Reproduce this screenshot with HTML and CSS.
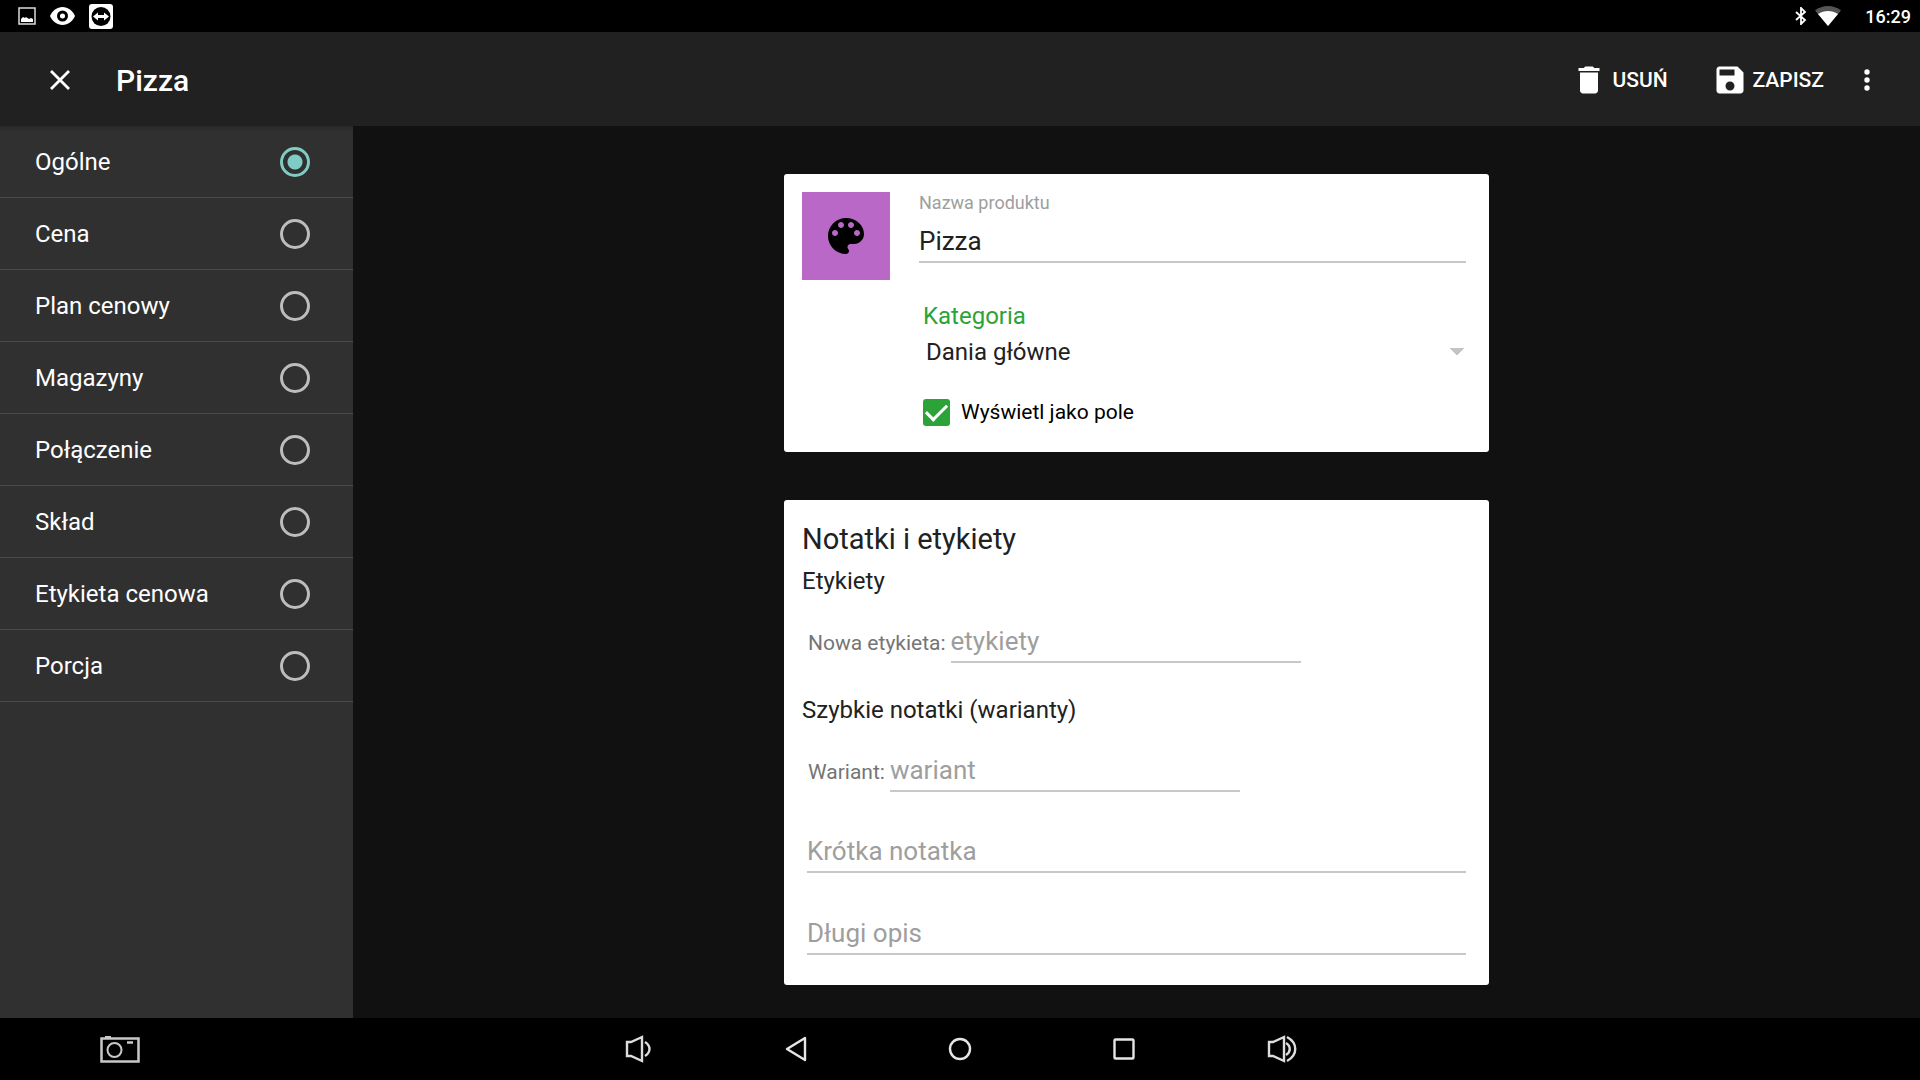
FILE: index.html
```html
<!DOCTYPE html>
<html lang="pl">
<head>
    <meta charset="UTF-8">
    <meta name="viewport" content="width=device-width, initial-scale=1.0">
    <title>Pizza</title>
    <link rel="stylesheet" href="styles.css">
</head>
<body>
    <div class="status-bar">
        <div class="status-icons">
            <svg width="18" height="18" viewBox="0 0 18 18">
                <rect x="1" y="1" width="16" height="16" fill="none" stroke="#ddd" stroke-width="1.5"/>
                <path d="M3 15v-3l2-2 2 1 1-1 3 2 2-1 2 1v3z" fill="#fff"/>
            </svg>
            <svg width="25" height="18" viewBox="0 0 25 18">
                <path d="M12.500 0C7 0 2.500 3.500 0 9c2.500 5.500 7 9 12.500 9S22.500 14.500 25 9C22.500 3.500 18 0 12.500 0z" fill="#fff"/>
                <circle cx="12.500" cy="9" r="4" fill="#fff" stroke="#000" stroke-width="3"/>
                <circle cx="12.500" cy="9" r="2" fill="#fff"/>
            </svg>
            <svg width="24" height="25" viewBox="0 0 24 25">
                <rect width="24" height="25" rx="3" fill="#fff"/>
                <circle cx="12" cy="12.500" r="9.500" fill="#000"/>
                <path d="M4 12.500l5-4v2.500h6V8.500l5 4-5 4V14H9v2.500z" fill="#fff"/>
            </svg>
        </div>
        <div class="status-info">
            <svg width="12" height="18" viewBox="0 0 12 18">
                <path d="M1 5l9 8-4 4V1l4 4-9 8" fill="none" stroke="#fff" stroke-width="1.800"/>
            </svg>
            <svg width="26" height="20" viewBox="0 0 26 20">
                <path d="M0 4.500C7-1.500 19-1.500 26 4.500L13 20z" fill="#555"/>
                <path d="M3 8c6-4 14-4 20 0L13 20z" fill="#fff"/>
            </svg>
            <span class="clock">16:29</span>
        </div>
    </div>

    <header class="toolbar">
        <button class="icon-button close" type="button" aria-label="Zamknij">
            <svg width="20" height="20" viewBox="0 0 20 20">
                <path d="M1 1l18 18M19 1L1 19" stroke="#fff" stroke-width="2.800"/>
            </svg>
        </button>
        <h1 class="title">Pizza</h1>
        <button class="action" type="button">
            <svg width="36" height="36" viewBox="0 0 24 24" fill="#fff">
                <path d="M6 19c0 1.100.9 2 2 2h8c1.100 0 2-.9 2-2V7H6v12zM19 4h-3.500l-1-1h-5l-1 1H5v2h14V4z"/>
            </svg>
            USUŃ
        </button>
        <button class="action" type="button">
            <svg width="36" height="36" viewBox="0 0 24 24" fill="#fff">
                <path d="M17 3H5c-1.110 0-2 .9-2 2v14c0 1.100.89 2 2 2h14c1.100 0 2-.9 2-2V7l-4-4zm-5 16c-1.660 0-3-1.340-3-3s1.340-3 3-3 3 1.340 3 3-1.340 3-3 3zm3-10H5V5h10v4z"/>
            </svg>
            ZAPISZ
        </button>
        <button class="icon-button more" type="button" aria-label="Więcej">
            <svg width="6" height="22" viewBox="0 0 6 22" fill="#fff">
                <circle cx="3" cy="3" r="2.700"/>
                <circle cx="3" cy="11" r="2.700"/>
                <circle cx="3" cy="19" r="2.700"/>
            </svg>
        </button>
    </header>

    <div class="content">
        <nav class="sidebar">
            <label class="tab">Ogólne<input type="radio" name="tab" checked></label>
            <label class="tab">Cena<input type="radio" name="tab"></label>
            <label class="tab">Plan cenowy<input type="radio" name="tab"></label>
            <label class="tab">Magazyny<input type="radio" name="tab"></label>
            <label class="tab">Połączenie<input type="radio" name="tab"></label>
            <label class="tab">Skład<input type="radio" name="tab"></label>
            <label class="tab">Etykieta cenowa<input type="radio" name="tab"></label>
            <label class="tab">Porcja<input type="radio" name="tab"></label>
        </nav>

        <main class="main">
            <section class="card product">
                <button class="swatch" type="button" aria-label="Kolor">
                    <svg width="48" height="48" viewBox="0 0 24 24">
                        <path d="M12 3c-4.970 0-9 4.030-9 9s4.030 9 9 9c.83 0 1.500-.67 1.500-1.500 0-.39-.15-.74-.39-1.010-.23-.26-.38-.61-.38-.99 0-.83.67-1.500 1.500-1.500H16c2.760 0 5-2.240 5-5 0-4.420-4.030-8-9-8zm-5.500 9c-.83 0-1.500-.67-1.500-1.500S5.670 9 6.500 9 8 9.670 8 10.500 7.330 12 6.500 12zm3-4C8.670 8 8 7.330 8 6.500S8.670 5 9.500 5s1.500.67 1.500 1.500S10.330 8 9.500 8zm5 0c-.83 0-1.500-.67-1.500-1.500S13.670 5 14.500 5s1.500.67 1.500 1.500S15.330 8 14.500 8zm3 4c-.83 0-1.500-.67-1.500-1.500S16.670 9 17.500 9s1.500.67 1.500 1.500-.67 1.500-1.500 1.500z"/>
                    </svg>
                </button>
                <div class="product-fields">
                    <label class="name-label" for="name">Nazwa produktu</label>
                    <input class="field" id="name" type="text" value="Pizza">
                    <div class="category">
                        <label class="category-label" for="category">Kategoria</label>
                        <select class="category-select" id="category">
                            <option>Dania główne</option>
                        </select>
                        <label class="check">
                            <input type="checkbox" checked>
                            Wyświetl jako pole
                        </label>
                    </div>
                </div>
            </section>

            <section class="card notes">
                <h2 class="card-title">Notatki i etykiety</h2>
                <h3 class="subtitle">Etykiety</h3>
                <div class="inline-field">
                    <label for="tag">Nowa etykieta:</label>
                    <input class="field" id="tag" type="text" placeholder="etykiety">
                </div>
                <h3 class="subtitle">Szybkie notatki (warianty)</h3>
                <div class="inline-field">
                    <label for="variant">Wariant:</label>
                    <input class="field" id="variant" type="text" placeholder="wariant">
                </div>
                <div class="wide-fields">
                    <input class="field" type="text" placeholder="Krótka notatka" aria-label="Krótka notatka">
                    <input class="field" type="text" placeholder="Długi opis" aria-label="Długi opis">
                </div>
            </section>
        </main>
    </div>

    <footer class="nav-bar">
        <button class="nav-button camera" type="button" aria-label="Zrzut ekranu">
            <svg width="40" height="27" viewBox="0 0 40 27" fill="none" stroke="#c8c8c8">
                <rect x="1.500" y="2.500" width="37" height="23" stroke-width="2.500"/>
                <circle cx="14.500" cy="14" r="7" stroke-width="2"/>
                <path d="M5 1h6M27 6.500h6" stroke-width="2.500"/>
            </svg>
        </button>
        <div class="nav-keys">
            <button class="nav-button outer" type="button" aria-label="Ciszej">
                <svg width="26" height="28" viewBox="0 0 26 28" fill="none" stroke="#ddd" stroke-width="2.400">
                    <path d="M2 7h4l11-5v24L6 21H2z"/>
                    <path d="M20 7c6 4 6 10 0 14"/>
                </svg>
            </button>
            <button class="nav-button" type="button" aria-label="Wstecz">
                <svg width="22" height="26" viewBox="0 0 22 26" fill="none" stroke="#e6e6e6" stroke-width="2.400" stroke-linejoin="round">
                    <path d="M20 2v22L2 13z"/>
                </svg>
            </button>
            <button class="nav-button" type="button" aria-label="Ekran główny">
                <svg width="24" height="24" viewBox="0 0 24 24" fill="none" stroke="#e6e6e6" stroke-width="2.400">
                    <circle cx="12" cy="12" r="10"/>
                </svg>
            </button>
            <button class="nav-button" type="button" aria-label="Ostatnie">
                <svg width="22" height="22" viewBox="0 0 22 22" fill="none" stroke="#e6e6e6" stroke-width="2.400">
                    <rect x="1.500" y="1.500" width="19" height="19" rx="1"/>
                </svg>
            </button>
            <button class="nav-button outer" type="button" aria-label="Głośniej">
                <svg width="30" height="28" viewBox="0 0 30 28" fill="none" stroke="#ddd" stroke-width="2.400">
                    <path d="M2 7h4l11-5v24L6 21H2z"/>
                    <path d="M19 8c5 3 5 9 0 12M20 2c11 6 11 18 0 24"/>
                </svg>
            </button>
        </div>
    </footer>
</body>
</html>
```

FILE: styles.css
```css
* {
    box-sizing: border-box;
}
body {
    margin: 0;
    min-height: 100vh;
    display: flex;
    flex-direction: column;
    background: #111;
    color: #fff;
    font-family: Roboto, "Noto Sans", sans-serif;
    font-size: 24px;
}
button, input, select {
    font-family: inherit;
    font-size: inherit;
    color: inherit;
    margin: 0;
    padding: 0;
    border: 0;
    background: none;
}
button {
    display: flex;
    align-items: center;
    justify-content: center;
    cursor: pointer;
}
h1, h2, h3 {
    margin: 0;
}
svg {
    flex: none;
    display: block;
}

/* status bar */
.status-bar {
    height: 32px;
    padding: 0 9px 0 18px;
    display: flex;
    align-items: center;
    justify-content: space-between;
    background: #000;
}
.status-icons {
    display: flex;
    align-items: center;
    gap: 14px;
}
.status-info {
    display: flex;
    align-items: center;
    gap: 8px;
}
.clock {
    margin-left: 16px;
    font-size: 18px;
    font-weight: 500;
}

/* toolbar */
.toolbar {
    height: 94px;
    padding: 2px 32px 0;
    display: flex;
    align-items: center;
    background: #212121;
}
.icon-button {
    width: 56px;
    height: 56px;
}
.title {
    flex: 1;
    margin-left: 28px;
    font-size: 30px;
    font-weight: 500;
}
.action {
    margin-right: 44px;
    gap: 5px;
    font-size: 21px;
    font-weight: 500;
}
.more {
    width: 42px;
    margin-left: -22px;
}

/* sidebar */
.content {
    flex: 1;
    display: flex;
}
.sidebar {
    width: 353px;
    background: linear-gradient(#292929, #303030 6px);
}
.tab {
    height: 72px;
    padding: 0 43px 0 35px;
    display: flex;
    align-items: center;
    justify-content: space-between;
    border-bottom: 1px solid #4a4a4a;
}
.tab input {
    appearance: none;
    width: 30px;
    height: 30px;
    border: 3px solid #bdbdbd;
    border-radius: 50%;
}
.tab input:checked {
    border-color: #80cbc4;
    background: radial-gradient(circle, #80cbc4 7px, transparent 8px);
}

/* cards */
.main {
    flex: 1;
    padding: 48px 24px 33px;
    display: flex;
    flex-direction: column;
    align-items: center;
    gap: 48px;
}
.card {
    width: 100%;
    max-width: 705px;
    border-radius: 3px;
    background: #fff;
    color: #212121;
}
.product {
    padding: 18px 23px 25px 18px;
    display: flex;
    align-items: flex-start;
    gap: 29px;
}
.swatch {
    width: 88px;
    height: 88px;
    background: #ba68c8;
}
.product-fields {
    flex: 1;
    display: flex;
    flex-direction: column;
}
.name-label {
    font-size: 18px;
    line-height: 22px;
    color: #9e9e9e;
}
.field {
    width: 100%;
    height: 49px;
    padding-top: 6px;
    border-bottom: 2px solid #c8c8c8;
    font-size: 26px;
    outline: none;
}
.field::placeholder {
    color: #9e9e9e;
    opacity: 1;
}
.category {
    padding: 35px 0 0 4px;
    display: flex;
    flex-direction: column;
}
.category-label {
    line-height: 36px;
    color: #2ca339;
}
.category-select {
    height: 38px;
    padding: 0 0 2px 3px;
    appearance: none;
    background: conic-gradient(from -45deg at 50% 100%, #c4c4c4 90deg, transparent 0) no-repeat right 2px top 14px / 14px 7px;
}
.check {
    margin-top: 26px;
    display: flex;
    align-items: center;
    gap: 11px;
    font-size: 21px;
    line-height: 29px;
    color: #000;
}
.check input {
    appearance: none;
    width: 27px;
    height: 27px;
    border-radius: 3px;
    background: #2ca339;
    display: flex;
    align-items: center;
    justify-content: center;
}
.check input:checked::before {
    content: "";
    width: 18px;
    height: 9px;
    margin-bottom: 6px;
    border-left: 3px solid #fff;
    border-bottom: 3px solid #fff;
    transform: rotate(-45deg);
}

.notes {
    padding: 18px 23px 30px 18px;
}
.card-title {
    font-size: 29px;
    font-weight: 400;
    line-height: 42px;
}
.subtitle {
    font-size: 24px;
    font-weight: 400;
    line-height: 42px;
}
.inline-field {
    padding: 12px 0 26px 6px;
    display: flex;
    align-items: baseline;
    gap: 5px;
    font-size: 21px;
    color: #757575;
}
.inline-field .field {
    width: 350px;
}
.wide-fields {
    padding: 6px 0 0 5px;
    display: flex;
    flex-direction: column;
    gap: 33px;
}

/* navigation bar */
.nav-bar {
    height: 62px;
    display: grid;
    grid-template-columns: 1fr auto 1fr;
    background: #000;
}
.camera {
    justify-self: start;
    margin-left: 38px;
}
.nav-keys {
    display: flex;
}
.nav-button {
    width: 164px;
}
.nav-button.outer {
    width: 152px;
}
```
